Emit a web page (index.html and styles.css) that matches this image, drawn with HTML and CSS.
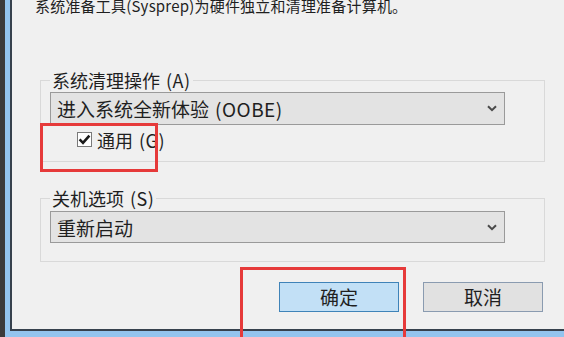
FILE: index.html
```html
<!DOCTYPE html>
<html>
<head>
	<meta charset="utf-8">
	<title>系统准备工具</title>
	<link rel="stylesheet" href="styles.css">
</head>
<body>

<div class="screen">
	<div class="screenEdge"></div>
	<div class="window">
		<div class="dialog">
			<p class="intro">系统准备工具(Sysprep)为硬件独立和清理准备计算机。</p>

			<fieldset class="group groupClean">
				<legend>系统清理操作<span class="key">(A)</span></legend>
				<div class="combo">
					<span>进入系统全新体验<span class="key">(OOBE)</span></span>
					<svg class="comboArrow" width="10" height="7" viewBox="0 0 10 7"><path d="M1 1.2 L5 5.2 L9 1.2" fill="none" stroke="#4a4a4a" stroke-width="2"/></svg>
				</div>
				<label class="check">
					<span class="checkBox">
						<svg width="15" height="15" viewBox="0 0 15 15"><path d="M2.6 7.4 L6 10.8 L12.4 3.6" fill="none" stroke="#1a1a1a" stroke-width="2.6"/></svg>
					</span>
					<span>通用<span class="key">(G)</span></span>
				</label>
			</fieldset>

			<fieldset class="group groupShutdown">
				<legend>关机选项<span class="key">(S)</span></legend>
				<div class="combo">
					<span>重新启动</span>
					<svg class="comboArrow" width="10" height="7" viewBox="0 0 10 7"><path d="M1 1.2 L5 5.2 L9 1.2" fill="none" stroke="#4a4a4a" stroke-width="2"/></svg>
				</div>
			</fieldset>

			<div class="buttons">
				<button class="btn btnDefault">确定</button>
				<button class="btn">取消</button>
			</div>
		</div>
	</div>

	<!-- red annotation frames drawn over the screenshot -->
	<div class="mark markCheck"></div>
	<div class="mark markOk"></div>
</div>

</body>
</html>
```

FILE: styles.css
```css
body {
	margin: 0;
	font-family: "Noto Sans CJK SC", "Liberation Sans", sans-serif;
	color: #1f1f1f;
}
.screen {
	position: relative;
	display: flex;
	height: 337px;
	overflow: hidden;
	background-color: #3b3b3b;
}
.screenEdge {
	width: 5px;
	flex: none;
}
.window {
	flex: 1;
	background-color: #93c4ee;
	padding: 0 0 6px 5px;
}
.dialog {
	display: flow-root;
	height: 329px;
	background-color: #f0f0f0;
	border-left: 2px solid #36414d;
	border-bottom: 2px solid #36414d;
}
.intro {
	margin: -3px 0 56px 23px;
	font-size: 15px;
	line-height: 18px;
	letter-spacing: 0.2px;
	white-space: nowrap;
}
.key {
	margin-left: 6px;
	letter-spacing: 0.5px;
}

.group {
	box-sizing: border-box;
	width: 505px;
	min-inline-size: 0;
	margin: 0 0 0 28px;
	border: 1px solid #d9d9d9;
	padding: 3px 9px 11px 9px;
}
.group legend {
	padding: 0 2px;
	font-size: 18px;
	line-height: 18px;
}
.groupShutdown {
	margin-top: 27px;
	padding-top: 4px;
	padding-bottom: 18px;
}

.combo {
	box-sizing: border-box;
	display: flex;
	align-items: center;
	justify-content: space-between;
	width: 455px;
	height: 33px;
	padding: 0 7px 0 6px;
	border: 1px solid #9a9a9a;
	background-color: #e3e3e3;
	font-size: 19px;
}
.groupShutdown .combo {
	height: 32px;
}

.check {
	display: flex;
	align-items: center;
	gap: 5px;
	height: 21px;
	margin: 4px 0 0 27px;
	font-size: 18px;
}
.checkBox {
	box-sizing: border-box;
	display: flex;
	width: 15px;
	height: 15px;
	border: 1px solid #7a7a7a;
	background-color: #fff;
}
.checkBox svg {
	margin: -1px;
}

.buttons {
	display: flex;
	justify-content: flex-end;
	gap: 24px;
	width: 505px;
	margin: 20px 0 0 28px;
	padding-right: 2px;
	box-sizing: border-box;
}
.btn {
	box-sizing: border-box;
	width: 120px;
	height: 30px;
	padding: 0;
	border: 1px solid #8a9bb0;
	background-color: #e1e1e1;
	font-family: inherit;
	font-size: 19px;
	line-height: 28px;
	color: #1f1f1f;
}
.btnDefault {
	border-color: #3f83b8;
	background-color: #c2e0f6;
}

.mark {
	position: absolute;
	box-sizing: border-box;
	border: 3px solid #e63a3a;
}
.markCheck {
	left: 40px;
	top: 123px;
	width: 118px;
	height: 49px;
}
.markOk {
	left: 240px;
	top: 267px;
	width: 166px;
	height: 90px;
}
```
